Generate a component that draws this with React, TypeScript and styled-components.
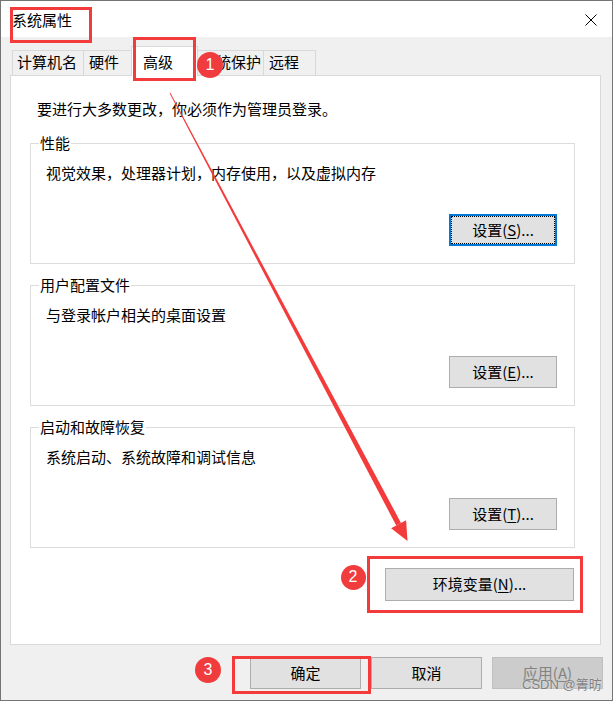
import React from "react";
import styled, { createGlobalStyle } from "styled-components";

const Global = createGlobalStyle`
  html, body { margin: 0; padding: 0; background: #ffffff; }
  body {
    font-family: "Noto Sans CJK SC", "Noto Sans", "Liberation Sans", sans-serif;
    font-size: 15px;
    color: #000;
  }
`;

const RED = "#f33b3b";

const Stage = styled.div`
  position: relative;
  width: 613px;
  height: 702px;
  background: #ffffff;
`;

const Window = styled.div`
  position: relative;
  z-index: 0;
  box-sizing: border-box;
  width: 613px;
  height: 701px;
  border: 1px solid #747474;
  background: #f0f0f0;
  display: flex;
  flex-direction: column;
  overflow: hidden;
`;

const TitleBar = styled.div`
  height: 36px;
  flex: none;
  background: #ffffff;
  display: flex;
  align-items: center;
  justify-content: space-between;
  padding: 0 15px 0 11px;
  font-size: 15px;
  line-height: 20px;
`;

const TitleText = styled.span`
  padding-top: 2px;
`;

const CloseIcon = styled.svg`
  width: 12px;
  height: 12px;
  display: block;
  margin-top: 2px;
`;

const Body = styled.div`
  flex: 1;
  display: flex;
  flex-direction: column;
  padding: 0 11px 0 9px;
`;

const TabRow = styled.div`
  position: relative;
  z-index: 1;
  height: 39px;
  margin-bottom: -1px;
  padding-left: 2px;
  display: flex;
  align-items: flex-end;
`;

const Tab = styled.div<{ $w: number; $pl: number; $active?: boolean }>`
  position: relative;
  box-sizing: border-box;
  width: ${(p) => (p.$active ? p.$w + 4 : p.$w)}px;
  height: ${(p) => (p.$active ? 30 : 25)}px;
  margin-bottom: ${(p) => (p.$active ? 0 : 1)}px;
  margin-left: ${(p) => (p.$active ? -3 : -1)}px;
  margin-right: ${(p) => (p.$active ? -2 : 0)}px;
  z-index: ${(p) => (p.$active ? 2 : 1)};
  border: 1px solid #d9d9d9;
  border-bottom: none;
  background: ${(p) => (p.$active ? "#ffffff" : "#f0f0f0")};
  padding-left: ${(p) => p.$pl}px;
  padding-top: ${(p) => (p.$active ? 5 : 1)}px;
  font-size: 15px;
  line-height: 20px;
  white-space: nowrap;
  overflow: hidden;
  &:first-child { margin-left: 0; }
`;

const Panel = styled.div`
  box-sizing: border-box;
  height: 570px;
  flex: none;
  background: #ffffff;
  border: 1px solid #d9d9d9;
  padding: 23px 25px 0 19px;
  display: flex;
  flex-direction: column;
`;

const Intro = styled.div`
  padding-left: 7px;
  line-height: 20px;
  font-size: 15px;
`;

const Group = styled.fieldset<{ $mt: number }>`
  margin: ${(p) => p.$mt}px 0 0 0;
  min-width: 0;
  padding: 10px 17px 17px 8px;
  border: 1px solid #dcdcdc;
`;

const Legend = styled.legend`
  padding: 0 1px;
  font-size: 15px;
  line-height: 20px;
`;

const Desc = styled.div`
  padding-left: 7px;
  font-size: 15px;
  line-height: 20px;
`;

const RightRow = styled.div<{ $mt: number; $mr?: number }>`
  display: flex;
  justify-content: flex-end;
  margin-top: ${(p) => p.$mt}px;
  margin-right: ${(p) => p.$mr ?? 0}px;
`;

const Button = styled.button<{ $w: number; $h?: number; $focused?: boolean; $disabled?: boolean }>`
  box-sizing: border-box;
  width: ${(p) => p.$w}px;
  height: ${(p) => p.$h ?? 32}px;
  margin: 0;
  padding: 0 0 1px 0;
  font-family: "Noto Sans CJK SC", "Noto Sans", "Liberation Sans", sans-serif;
  font-size: 15px;
  line-height: 20px;
  color: ${(p) => (p.$disabled ? "#838383" : "#000")};
  background: ${(p) => (p.$disabled ? "#cccccc" : "#e1e1e1")};
  border: ${(p) =>
    p.$focused ? "2px solid #0078d7" : p.$disabled ? "1px solid #bfbfbf" : "1px solid #adadad"};
  outline: ${(p) => (p.$focused ? "1px dotted #000" : "none")};
  outline-offset: -3px;
  cursor: default;
  u { text-underline-offset: 2px; }
`;

const BottomBar = styled.div`
  display: flex;
  justify-content: flex-end;
  gap: 10px;
  margin-top: 12px;
  margin-right: -2px;
`;

const RedBox = styled.div<{ $x: number; $y: number; $w: number; $h: number }>`
  position: absolute;
  z-index: 10;
  left: ${(p) => p.$x}px;
  top: ${(p) => p.$y}px;
  width: ${(p) => p.$w}px;
  height: ${(p) => p.$h}px;
  box-sizing: border-box;
  border: 3px solid ${RED};
  pointer-events: none;
`;

const Badge = styled.div<{ $cx: number; $cy: number; $d: number }>`
  position: absolute;
  z-index: 11;
  left: ${(p) => p.$cx - p.$d / 2}px;
  top: ${(p) => p.$cy - p.$d / 2}px;
  width: ${(p) => p.$d}px;
  height: ${(p) => p.$d}px;
  border-radius: 50%;
  background: #f03c3c;
  color: #ffffff;
  display: flex;
  align-items: center;
  justify-content: center;
  font-family: "Liberation Sans", Arial, sans-serif;
  font-size: 16px;
  line-height: 1;
`;

const ArrowLayer = styled.svg`
  position: absolute;
  z-index: 9;
  left: 0;
  top: 0;
  width: 613px;
  height: 702px;
  pointer-events: none;
`;

const Watermark = styled.div`
  position: absolute;
  z-index: 12;
  left: 522px;
  top: 677px;
  font-family: "Liberation Sans", "Noto Sans CJK SC", sans-serif;
  font-size: 13px;
  line-height: 16px;
  color: rgba(118, 118, 118, 0.9);
  text-shadow: 0 0 2px rgba(255, 255, 255, 0.6);
  white-space: nowrap;
  pointer-events: none;
`;

const tabs = [
  { label: "计算机名", w: 72, pl: 4 },
  { label: "硬件", w: 51, pl: 5 },
  { label: "高级", w: 63, pl: 11, active: true },
  { label: "系统保护", w: 69, pl: 5 },
  { label: "远程", w: 53, pl: 5 },
];

function arrowPoints() {
  const sx = 170, sy = 93, tx = 407.5, ty = 541;
  const dx = tx - sx, dy = ty - sy;
  const len = Math.hypot(dx, dy);
  const ux = dx / len, uy = dy / len;
  const nx = uy, ny = -ux;
  const bx = tx - ux * 19, by = ty - uy * 19;
  const w0 = 0.5, w1 = 2.7, hw = 8.5;
  const shaft = [
    [sx + nx * w0, sy + ny * w0],
    [bx + nx * w1, by + ny * w1],
    [bx - nx * w1, by - ny * w1],
    [sx - nx * w0, sy - ny * w0],
  ];
  const head = [
    [bx + nx * hw, by + ny * hw],
    [tx, ty],
    [bx - nx * hw, by - ny * hw],
  ];
  const f = (a: number[][]) => a.map((p) => `${p[0].toFixed(1)},${p[1].toFixed(1)}`).join(" ");
  return { shaft: f(shaft), head: f(head) };
}

export default function App() {
  const arrow = arrowPoints();
  return (
    <Stage>
      <Global />
      <Window>
        <TitleBar>
          <TitleText>系统属性</TitleText>
          <CloseIcon viewBox="0 0 12 12">
            <path d="M0.5 0.5 L11.5 11.5 M11.5 0.5 L0.5 11.5" stroke="#000" strokeWidth="1" fill="none" />
          </CloseIcon>
        </TitleBar>
        <Body>
          <TabRow>
            {tabs.map((t) => (
              <Tab key={t.label} $w={t.w} $pl={t.pl} $active={t.active}>
                {t.label}
              </Tab>
            ))}
          </TabRow>
          <Panel>
            <Intro>要进行大多数更改，你必须作为管理员登录。</Intro>
            <Group $mt={14}>
              <Legend>性能</Legend>
              <Desc>视觉效果，处理器计划，内存使用，以及虚拟内存</Desc>
              <RightRow $mt={31}>
                <Button $w={108} $focused>
                  设置(<u>S</u>)...
                </Button>
              </RightRow>
            </Group>
            <Group $mt={11}>
              <Legend>用户配置文件</Legend>
              <Desc>与登录帐户相关的桌面设置</Desc>
              <RightRow $mt={31}>
                <Button $w={108}>
                  设置(<u>E</u>)...
                </Button>
              </RightRow>
            </Group>
            <Group $mt={11}>
              <Legend>启动和故障恢复</Legend>
              <Desc>系统启动、系统故障和调试信息</Desc>
              <RightRow $mt={31}>
                <Button $w={108}>
                  设置(<u>T</u>)...
                </Button>
              </RightRow>
            </Group>
            <RightRow $mt={20} $mr={1}>
              <Button $w={189} $h={33}>
                环境变量(<u>N</u>)...
              </Button>
            </RightRow>
          </Panel>
          <BottomBar>
            <Button $w={111}>确定</Button>
            <Button $w={111}>取消</Button>
            <Button $w={111} $disabled>
              应用(<u>A</u>)
            </Button>
          </BottomBar>
        </Body>
      </Window>

      <ArrowLayer viewBox="0 0 613 702">
        <polygon points={arrow.shaft} fill={RED} />
        <polygon points={arrow.head} fill={RED} />
      </ArrowLayer>

      <RedBox $x={10} $y={7} $w={82} $h={36} />
      <RedBox $x={133} $y={37} $w={63} $h={44} />
      <RedBox $x={367} $y={556} $w={216} $h={57} />
      <RedBox $x={232} $y={656} $w={139} $h={38} />

      <Badge $cx={210} $cy={65} $d={26}>1</Badge>
      <Badge $cx={353} $cy={577} $d={25}>2</Badge>
      <Badge $cx={208} $cy={670} $d={26}>3</Badge>

      <Watermark>CSDN @箐昉</Watermark>
    </Stage>
  );
}
